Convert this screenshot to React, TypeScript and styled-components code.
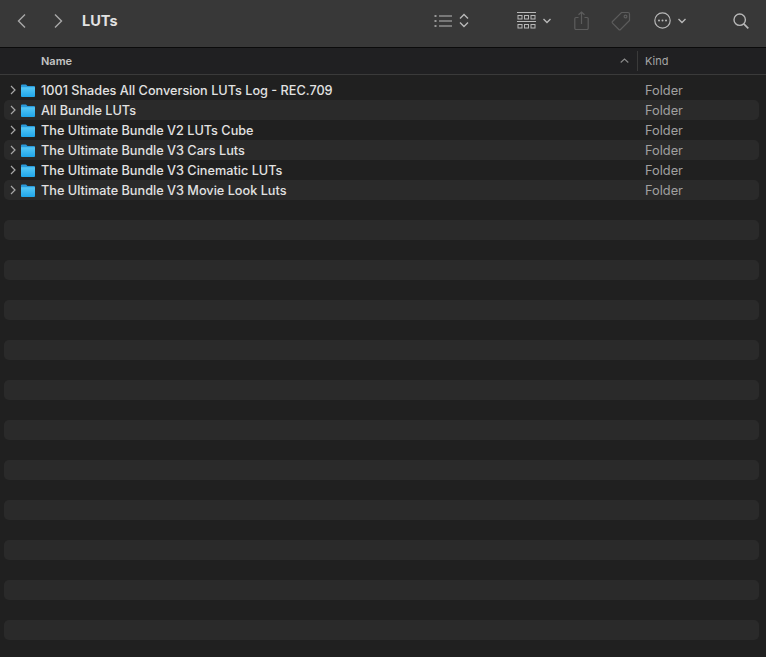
import styled, { createGlobalStyle } from "styled-components"
import { FC } from 'react';

const Global = createGlobalStyle`
    html, body {
        margin: 0;
        padding: 0;
        background: #202020;
        overflow: hidden;
    }
    body {
        font-family: "Inter", "Liberation Sans", sans-serif;
    }
`

const Window = styled.div`
    width: 766px;
    height: 657px;
    display: flex;
    flex-direction: column;
    overflow: hidden;
    background: #202020;
`

const Toolbar = styled.div`
    height: 41px;
    flex: none;
    display: flex;
    align-items: center;
    background: #383838;
    border-bottom: 1px solid #0b0b0b;
    padding-left: 16px;
    padding-bottom: 6px;
`

const NavIcon = styled.svg<{ $gap: number }>`
    flex: none;
    margin-right: ${p => p.$gap}px;
`

const Title = styled.div`
    width: 352px;
    flex: none;
    font-size: 14.5px;
    font-weight: 700;
    color: #e2e2e2;
`

const ToolIcon = styled.svg<{ $gap?: number }>`
    flex: none;
    margin-right: ${p => p.$gap ?? 0}px;
`

const HeaderRow = styled.div`
    height: 25px;
    padding-bottom: 1px;
    flex: none;
    display: flex;
    align-items: center;
    background: #202022;
    border-bottom: 1px solid #3a3a3a;
    font-size: 11px;
`

const NameHead = styled.div`
    width: 637px;
    flex: none;
    box-sizing: border-box;
    padding-left: 41px;
    padding-right: 8px;
    display: flex;
    align-items: center;
    justify-content: space-between;
    font-weight: 600;
    color: #c4c4c4;
`

const KindHead = styled.div`
    height: 20px;
    flex: 1;
    display: flex;
    align-items: center;
    padding-left: 7px;
    border-left: 1px solid #3a3a3a;
    color: #a5a5a5;
`

const List = styled.div`
    flex: 1;
    padding: 5px 7px 0 4px;
    display: flex;
    flex-direction: column;
`

const Row = styled.div<{ $striped: boolean }>`
    height: 20px;
    flex: none;
    display: flex;
    align-items: center;
    border-radius: 5px;
    background: ${p => (p.$striped ? "#2a2a2a" : "transparent")};
`

const Disclosure = styled.svg`
    flex: none;
    margin: 0 5px 0 6px;
`

const FolderIcon = styled.svg`
    flex: none;
    margin-right: 6px;
`

const Name = styled.span`
    width: 604px;
    flex: none;
    font-size: 12.7px;
    font-weight: 500;
    color: #e2e2e2;
    white-space: nowrap;
`

const Kind = styled.span`
    font-size: 12.8px;
    color: #a0a0a0;
`

const folders = [
    "1001 Shades All Conversion LUTs Log - REC.709",
    "All Bundle LUTs",
    "The Ultimate Bundle V2 LUTs Cube",
    "The Ultimate Bundle V3 Cars Luts",
    "The Ultimate Bundle V3 Cinematic LUTs",
    "The Ultimate Bundle V3 Movie Look Luts",
]

const emptyRows = 23

const Folder: FC = () => (
    <FolderIcon width="14" height="13" viewBox="0 0 14 13">
        <defs>
            <linearGradient id="fold" x1="0" y1="0" x2="0" y2="1">
                <stop offset="0" stopColor="#56c8f7" />
                <stop offset="1" stopColor="#1fa6ea" />
            </linearGradient>
        </defs>
        <path d="M1 0.5h4l1.5 1.5H13a1 1 0 0 1 1 1V4H0V1.5a1 1 0 0 1 1-1z" fill="#2a9ada" />
        <path d="M0 3.2h14v8.8a1 1 0 0 1-1 1H1a1 1 0 0 1-1-1z" fill="url(#fold)" />
    </FolderIcon>
)

const App: FC = () => {
    return (
        <Window>
            <Global />
            <Toolbar>
                <NavIcon $gap={26} width="11" height="16" viewBox="0 0 11 16" fill="none" stroke="#a8a8a8" strokeWidth="1.4">
                    <path d="M9 1.5L2.5 8L9 14.5" />
                </NavIcon>
                <NavIcon $gap={18} width="11" height="16" viewBox="0 0 11 16" fill="none" stroke="#a8a8a8" strokeWidth="1.4">
                    <path d="M2 1.5L8.5 8L2 14.5" />
                </NavIcon>
                <Title>LUTs</Title>
                <ToolIcon $gap={7} width="18" height="14" viewBox="0 0 18 14" stroke="#b8b8b8" strokeWidth="1.2" fill="none">
                    <path d="M5 2h13M5 7h13M5 12h13" />
                    <path d="M0.5 2h2M0.5 7h2M0.5 12h2" strokeWidth="1.6" />
                </ToolIcon>
                <ToolIcon $gap={48} width="10" height="15" viewBox="0 0 10 15" stroke="#b8b8b8" strokeWidth="1.4" fill="none">
                    <path d="M1 5.5L5 1.5L9 5.5M1 9.5L5 13.5L9 9.5" />
                </ToolIcon>
                <ToolIcon $gap={7} width="19" height="18" viewBox="0 0 19 18" stroke="#b8b8b8" strokeWidth="1" fill="none">
                    <path d="M0 0.5h19M0 9.5h19" />
                    <rect x="1" y="3.5" width="4" height="3.5" />
                    <rect x="7.5" y="3.5" width="4" height="3.5" />
                    <rect x="14" y="3.5" width="4" height="3.5" />
                    <rect x="1" y="12.5" width="4" height="3.5" />
                    <rect x="7.5" y="12.5" width="4" height="3.5" />
                    <rect x="14" y="12.5" width="4" height="3.5" />
                </ToolIcon>
                <ToolIcon $gap={23} width="8" height="6" viewBox="0 0 8 6" stroke="#b8b8b8" strokeWidth="1.4" fill="none">
                    <path d="M0.5 1L4 4.5L7.5 1" />
                </ToolIcon>
                <ToolIcon $gap={22} width="15" height="19" viewBox="0 0 15 19" stroke="#5c5c5c" strokeWidth="1.2" fill="none">
                    <path d="M4.5 6.5H2a1.2 1.2 0 0 0-1.2 1.2v9.6A1.2 1.2 0 0 0 2 18.5h11a1.2 1.2 0 0 0 1.2-1.2V7.7A1.2 1.2 0 0 0 13 6.5h-2.5" />
                    <path d="M7.5 13V1M4.5 3.8L7.5 1l3 2.8" />
                </ToolIcon>
                <ToolIcon $gap={23} width="20" height="20" viewBox="0 0 20 20" stroke="#5c5c5c" strokeWidth="1.2" fill="none">
                    <path d="M10.5 1.5h6.5a1.5 1.5 0 0 1 1.5 1.5v6.5L9.5 18.5a1.2 1.2 0 0 1-1.7 0L1.5 12.2a1.2 1.2 0 0 1 0-1.7z" />
                    <circle cx="14.5" cy="5.5" r="1.4" />
                </ToolIcon>
                <ToolIcon $gap={7} width="17" height="17" viewBox="0 0 17 17" fill="none">
                    <circle cx="8.5" cy="8.5" r="7.7" stroke="#b8b8b8" strokeWidth="1.2" />
                    <circle cx="5" cy="8.5" r="1" fill="#b8b8b8" />
                    <circle cx="8.5" cy="8.5" r="1" fill="#b8b8b8" />
                    <circle cx="12" cy="8.5" r="1" fill="#b8b8b8" />
                </ToolIcon>
                <ToolIcon $gap={47} width="8" height="6" viewBox="0 0 8 6" stroke="#b8b8b8" strokeWidth="1.4" fill="none">
                    <path d="M0.5 1L4 4.5L7.5 1" />
                </ToolIcon>
                <ToolIcon width="16" height="16" viewBox="0 0 16 16" stroke="#b8b8b8" strokeWidth="1.4" fill="none">
                    <circle cx="6.7" cy="6.7" r="5.7" />
                    <path d="M10.8 10.8L15.3 15.3" strokeWidth="1.7" />
                </ToolIcon>
            </Toolbar>
            <HeaderRow>
                <NameHead>
                    Name
                    <svg width="9" height="5" viewBox="0 0 9 5" fill="none" stroke="#8a8a8a" strokeWidth="1.1">
                        <path d="M0.7 4.5L4.5 1L8.3 4.5" />
                    </svg>
                </NameHead>
                <KindHead>Kind</KindHead>
            </HeaderRow>
            <List>
                {folders.map((name, i) => (
                    <Row key={name} $striped={i % 2 === 1}>
                        <Disclosure width="6" height="10" viewBox="0 0 6 10" fill="none" stroke="#a8a8a8" strokeWidth="1.2">
                            <path d="M1 1l4 4-4 4" />
                        </Disclosure>
                        <Folder />
                        <Name>{name}</Name>
                        <Kind>Folder</Kind>
                    </Row>
                ))}
                {Array.from({ length: emptyRows }).map((_, i) => (
                    <Row key={i} $striped={(i + folders.length) % 2 === 1} />
                ))}
            </List>
        </Window>
    )
}

export default App
